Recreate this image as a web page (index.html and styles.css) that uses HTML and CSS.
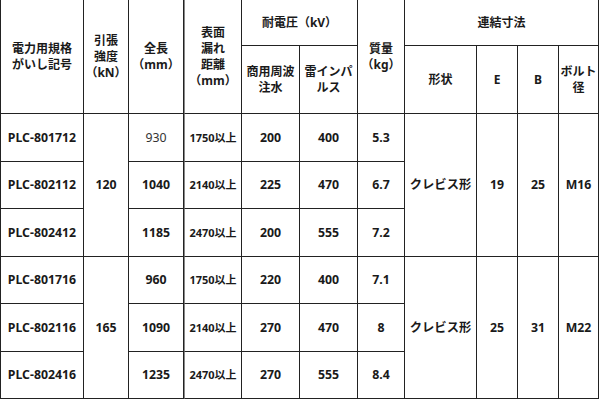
FILE: index.html
```html
<!DOCTYPE html>
<html lang="ja">
<head>
<meta charset="utf-8">
<link rel="stylesheet" href="styles.css">
</head>
<body>
<table class="spec">
  <colgroup>
    <col class="c-code"><col class="c-str"><col class="c-len"><col class="c-leak">
    <col class="c-wet"><col class="c-imp"><col class="c-mass"><col class="c-shape">
    <col class="c-e"><col class="c-b"><col class="c-bolt">
  </colgroup>
  <thead>
    <tr class="h1">
      <th rowspan="2">電力用規格<br>がいし記号</th>
      <th rowspan="2">引張<br>強度<br>（kN）</th>
      <th rowspan="2">全長<br>（mm）</th>
      <th rowspan="2" class="thick">表面<br>漏れ<br>距離<br>（mm）</th>
      <th colspan="2">耐電圧（kV）</th>
      <th rowspan="2">質量<br>（kg）</th>
      <th colspan="4">連結寸法</th>
    </tr>
    <tr class="h2">
      <th>商用周波<br>注水</th>
      <th>雷インパ<br>ルス</th>
      <th>形状</th>
      <th>E</th>
      <th>B</th>
      <th>ボルト<br>径</th>
    </tr>
  </thead>
  <tbody>
    <tr class="r48">
      <td>PLC-801712</td>
      <td rowspan="3">120</td>
      <td class="light">930</td>
      <td class="small thick">1750以上</td>
      <td>200</td><td>400</td><td>5.3</td>
      <td rowspan="3">クレビス形</td>
      <td rowspan="3">19</td>
      <td rowspan="3">25</td>
      <td rowspan="3">M16</td>
    </tr>
    <tr class="r47">
      <td>PLC-802112</td>
      <td>1040</td>
      <td class="small thick">2140以上</td>
      <td>225</td><td>470</td><td>6.7</td>
    </tr>
    <tr class="r48">
      <td>PLC-802412</td>
      <td>1185</td>
      <td class="small thick">2470以上</td>
      <td>200</td><td>555</td><td>7.2</td>
    </tr>
    <tr class="r47">
      <td>PLC-801716</td>
      <td rowspan="3">165</td>
      <td>960</td>
      <td class="small thick">1750以上</td>
      <td>220</td><td>400</td><td>7.1</td>
      <td rowspan="3">クレビス形</td>
      <td rowspan="3">25</td>
      <td rowspan="3">31</td>
      <td rowspan="3">M22</td>
    </tr>
    <tr class="r48">
      <td>PLC-802116</td>
      <td>1090</td>
      <td class="small thick">2140以上</td>
      <td>270</td><td>470</td><td>8</td>
    </tr>
    <tr class="r47">
      <td>PLC-802416</td>
      <td>1235</td>
      <td class="small thick">2470以上</td>
      <td>270</td><td>555</td><td>8.4</td>
    </tr>
  </tbody>
</table>
</body>
</html>
```

FILE: styles.css
```css
html, body {
  margin: 0;
  padding: 0;
  background: #fff;
}
body {
  font-family: "Noto Sans", "Noto Sans CJK JP", sans-serif;
  color: #1a1a1a;
  overflow: hidden;
}
.spec {
  table-layout: fixed;
  border-collapse: separate;
  border-spacing: 0;
  width: 599px;
  margin-top: -1px;
  border-left: 1px solid #222;
  border-top: 1px solid #222;
}
.spec col.c-code { width: 83px; }
.spec col.c-str { width: 45px; }
.spec col.c-len { width: 55px; }
.spec col.c-leak { width: 58px; }
.spec col.c-wet { width: 58px; }
.spec col.c-imp { width: 58px; }
.spec col.c-mass { width: 47px; }
.spec col.c-shape { width: 72px; }
.spec col.c-e { width: 41px; }
.spec col.c-b { width: 41px; }
.spec col.c-bolt { width: 40px; }
.spec th, .spec td {
  box-sizing: border-box;
  border-right: 1px solid #222;
  border-bottom: 1px solid #222;
  padding: 0;
  text-align: center;
  vertical-align: middle;
  font-weight: 700;
}
.spec th {
  font-size: 12px;
  line-height: 16px;
}
.spec td {
  font-size: 12.3px;
  line-height: 16px;
}
.spec tr.h1 { height: 46px; }
.spec tr.h2 { height: 68px; }
.spec tr.r48 { height: 48px; }
.spec tr.r47 { height: 47px; }
.spec td.small {
  font-size: 11px;
}
.spec td.light {
  font-weight: 400;
  color: #333;
}
.spec th.thick,
.spec td.thick {
  border-left: 1px solid #888;
}
```
